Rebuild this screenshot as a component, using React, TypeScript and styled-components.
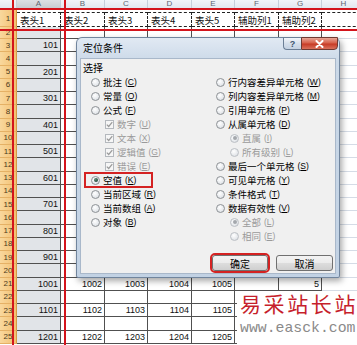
import React from 'react'
import styled, {createGlobalStyle, css} from 'styled-components'

const CJK = '"Noto Sans CJK SC", "Liberation Sans", sans-serif'
const LATIN = '"Liberation Sans", Arial, sans-serif'

const GlobalStyle = createGlobalStyle`
  html, body {
    margin: 0;
    padding: 0;
    background: #fff;
  }
  body {
    width: 357px;
    height: 345px;
    overflow: hidden;
    font-family: ${LATIN};
  }
`

const COLS = ['A', 'B', 'C', 'D', 'E', 'F', 'G', 'H']
const HEADERS = ['表头1', '表头2', '表头3', '表头4', '表头5', '辅助列1', '辅助列2', '']
const ROWS = Array.from({length: 25}, (_, i) => i + 1)

function cellValue(row: number, col: number): string {
  if (row === 1) return HEADERS[col]
  if (row < 3 || row % 2 === 0) return ''
  const base = (row - 1) / 2
  if (col === 0) return String(base * 100 + 1)
  if (row >= 21 && col <= 4) return String(base * 100 + col + 1)
  if (row === 21 && col === 6) return '5'
  return ''
}

type Opt = {
  label: string
  key: string
  kind?: 'radio' | 'check'
  indent?: boolean
  on?: boolean
  off?: boolean
  marked?: boolean
}

const LEFT_OPTS: Opt[] = [
  {label: '批注', key: 'C'},
  {label: '常量', key: 'O'},
  {label: '公式', key: 'F'},
  {label: '数字', key: 'U', kind: 'check', indent: true, on: true, off: true},
  {label: '文本', key: 'X', kind: 'check', indent: true, on: true, off: true},
  {label: '逻辑值', key: 'G', kind: 'check', indent: true, on: true, off: true},
  {label: '错误', key: 'E', kind: 'check', indent: true, on: true, off: true},
  {label: '空值', key: 'K', on: true, marked: true},
  {label: '当前区域', key: 'R'},
  {label: '当前数组', key: 'A'},
  {label: '对象', key: 'B'},
]

const RIGHT_OPTS: Opt[] = [
  {label: '行内容差异单元格', key: 'W'},
  {label: '列内容差异单元格', key: 'M'},
  {label: '引用单元格', key: 'P'},
  {label: '从属单元格', key: 'D'},
  {label: '直属', key: 'I', indent: true, on: true, off: true},
  {label: '所有级别', key: 'L', indent: true, off: true},
  {label: '最后一个单元格', key: 'S'},
  {label: '可见单元格', key: 'Y'},
  {label: '条件格式', key: 'T'},
  {label: '数据有效性', key: 'V'},
  {label: '全部', key: 'L', indent: true, on: true, off: true},
  {label: '相同', key: 'E', indent: true, off: true},
]

function OptionList({items}: {items: Opt[]}) {
  return (
    <OptionColumn>
      {items.map(o => (
        <OptionRow key={o.label} $indent={o.indent ? 14 : 0} $off={o.off} $marked={o.marked}>
          {o.kind === 'check' ? (
            <CheckBox $off={o.off}>
              {o.on && (
                <svg width='7' height='7' viewBox='0 0 7 7'>
                  <polyline points='0.8,3.6 2.7,5.5 6.3,1.2' fill='none' stroke='#9a9a9a' strokeWidth='1.2' />
                </svg>
              )}
            </CheckBox>
          ) : (
            <Radio $on={o.on} $off={o.off} />
          )}
          <span>{o.label}</span>
          <Key>
            (<u>{o.key}</u>)
          </Key>
        </OptionRow>
      ))}
    </OptionColumn>
  )
}

export default function App() {
  return (
    <>
      <GlobalStyle />
      <Screen>
        <Sheet>
          <ColHead />
          {COLS.map(c => (
            <ColHead key={c} $active={c === 'A'}>
              {c}
            </ColHead>
          ))}
          {ROWS.map(r => (
            <React.Fragment key={r}>
              <RowHead>{r}</RowHead>
              {COLS.map((c, i) => (
                <Cell
                  key={c}
                  $sel={i === 0 && r >= 2}
                  $boxed={i <= 6 && r >= 2}
                  $ants={r === 1}
                  $text={r === 1}
                >
                  {cellValue(r, i)}
                </Cell>
              ))}
            </React.Fragment>
          ))}
        </Sheet>

        <RedRule $y={8} />
        <RedRule $y={29} />
        <RedRule $x={12} />
        <RedRule $x={64} />

        <Dialog>
          <TitleBar>
            <Title>定位条件</Title>
            <Controls>
              <HelpButton>?</HelpButton>
              <CloseButton>
                <svg width='9' height='8' viewBox='0 0 9 8'>
                  <path d='M1.5 1 L7.5 7 M7.5 1 L1.5 7' stroke='#fff' strokeWidth='2' strokeLinecap='round' />
                </svg>
              </CloseButton>
            </Controls>
          </TitleBar>
          <Client>
            <GroupLabel>选择</GroupLabel>
            <Options>
              <OptionList items={LEFT_OPTS} />
              <OptionList items={RIGHT_OPTS} />
            </Options>
            <ButtonRow>
              <DlgButton $w={56} $marked>
                确定
              </DlgButton>
              <DlgButton $w={57}>取消</DlgButton>
            </ButtonRow>
          </Client>
        </Dialog>

        <Watermark>
          <WmTitle>易采站长站</WmTitle>
          <WmUrl>www.easck.com</WmUrl>
        </Watermark>
      </Screen>
    </>
  )
}

const Screen = styled.div`
  position: relative;
  width: 357px;
  height: 345px;
  overflow: hidden;
  background: #fff;
`

const Sheet = styled.div`
  display: grid;
  grid-template-columns: 17px 44px 44px 43px 44px 43px 44px 43px 44px;
  grid-template-rows: 10px 17px 12px repeat(23, 13.26px);
  width: 366px;
  background: #fff;
`

const ColHead = styled.div<{$active?: boolean}>`
  box-sizing: border-box;
  overflow: hidden;
  text-align: center;
  font-size: 8px;
  line-height: 7px;
  color: #5d6672;
  background: ${p => (p.$active ? 'linear-gradient(#dde0e4, #c5cad0)' : 'linear-gradient(#f2f5f9, #e0e6ee)')};
  border-right: 1px solid #c6cfda;
  border-bottom: 1px solid #9fb1c5;
`

const RowHead = styled.div`
  box-sizing: border-box;
  display: flex;
  align-items: center;
  justify-content: center;
  font-size: 8px;
  color: #4a3b22;
  background: linear-gradient(90deg, #f9d89d, #f3c071);
  border-right: 1px solid #d69a44;
  border-bottom: 1px solid #e5b165;
`

const Cell = styled.div<{$sel?: boolean; $boxed?: boolean; $ants?: boolean; $text?: boolean}>`
  box-sizing: border-box;
  display: flex;
  align-items: center;
  justify-content: ${p => (p.$text ? 'flex-start' : 'flex-end')};
  padding: 0 2px 0 3px;
  overflow: hidden;
  white-space: nowrap;
  font-family: ${p => (p.$text ? CJK : LATIN)};
  font-size: ${p => (p.$text ? '9.5px' : '9px')};
  color: #111;
  background: ${p => (p.$sel ? '#e1e4e8' : '#fff')};
  border-right: 1px solid ${p => (p.$boxed ? '#505050' : '#d5dce6')};
  border-bottom: 1px solid ${p => (p.$boxed ? '#505050' : '#d5dce6')};

  ${p =>
    p.$ants &&
    css`
      margin-top: 2px;
      border-top: 1px dashed #222;
      border-bottom: 1px dashed #222;
      border-right: 1px dashed #222;
    `}
`

const RedRule = styled.div<{$x?: number; $y?: number}>`
  position: absolute;
  background: #d3141c;
  ${p =>
    p.$x !== undefined
      ? css`
          left: ${p.$x}px;
          top: 0;
          bottom: 0;
          width: 2px;
        `
      : css`
          top: ${p.$y}px;
          left: 0;
          right: 0;
          height: 2px;
        `}
`

const Dialog = styled.div`
  position: absolute;
  left: 76px;
  top: 37px;
  width: 264px;
  height: 241px;
  box-sizing: border-box;
  display: flex;
  flex-direction: column;
  border: 1px solid #71859d;
  border-radius: 6px 6px 2px 2px;
  background: linear-gradient(180deg, #e1e9f3 0%, #cbd9e8 10%, #c2d2e4 100%);
  box-shadow: 2px 3px 6px rgba(0, 0, 0, 0.35);
  font-family: ${CJK};
`

const TitleBar = styled.div`
  display: flex;
  align-items: flex-start;
  height: 20px;
  padding-left: 6px;
`

const Title = styled.div`
  font-size: 10px;
  line-height: 20px;
  color: #000;
`

const Controls = styled.div`
  display: flex;
  margin: -1px 1px 0 auto;
`

const HelpButton = styled.div`
  box-sizing: border-box;
  width: 18px;
  height: 13px;
  display: flex;
  align-items: center;
  justify-content: center;
  font-family: ${LATIN};
  font-size: 9px;
  font-weight: 700;
  color: #40566f;
  background: linear-gradient(#f3f6fa, #d5dfeb 50%, #c4d2e2);
  border: 1px solid #6c7f96;
  border-right: none;
  border-radius: 0 0 0 4px;
`

const CloseButton = styled.div`
  box-sizing: border-box;
  width: 37px;
  height: 13px;
  display: flex;
  align-items: center;
  justify-content: center;
  background: linear-gradient(#e8a596, #d6604a 45%, #c73b26 55%, #d9715c);
  border: 1px solid #6f3a32;
  border-radius: 0 0 4px 0;
`

const Client = styled.div`
  flex: 1;
  display: flex;
  flex-direction: column;
  margin: 0 3px 3px;
  padding: 2px 2px 0;
  box-sizing: border-box;
  background: #f0f0f0;
  border: 1px solid #a9b8ca;
`

const GroupLabel = styled.div`
  font-size: 10px;
  line-height: 14px;
  color: #000;
`

const Options = styled.div`
  display: grid;
  grid-template-columns: 125px 1fr;
  margin-left: 8px;
`

const OptionColumn = styled.div`
  display: flex;
  flex-direction: column;
`

const OptionRow = styled.div<{$indent: number; $off?: boolean; $marked?: boolean}>`
  position: relative;
  display: flex;
  align-items: center;
  height: 14px;
  padding-left: ${p => p.$indent}px;
  font-size: 9.5px;
  white-space: nowrap;
  color: ${p => (p.$off ? '#9a9a9a' : '#000')};

  & > span:nth-child(2) {
    margin-left: 3px;
  }

  ${p =>
    p.$marked &&
    css`
      &::after {
        content: '';
        position: absolute;
        left: -7px;
        top: -1px;
        width: 69px;
        height: 16px;
        box-sizing: border-box;
        border: 2px solid #d42222;
      }
    `}
`

const Radio = styled.span<{$on?: boolean; $off?: boolean}>`
  flex: none;
  box-sizing: border-box;
  width: 9px;
  height: 9px;
  border-radius: 50%;
  display: flex;
  align-items: center;
  justify-content: center;
  border: 1px solid ${p => (p.$off ? '#bcc0c5' : '#8e9296')};
  background: radial-gradient(circle at 40% 35%, #fff 0%, #e4e7eb 65%, #cdd2d8 100%);

  &::after {
    content: '';
    display: ${p => (p.$on ? 'block' : 'none')};
    width: 4px;
    height: 4px;
    border-radius: 50%;
    background: ${p => (p.$off ? '#a4a8ad' : 'radial-gradient(circle at 35% 35%, #5f8f7a, #123026)')};
  }
`

const CheckBox = styled.span<{$off?: boolean}>`
  flex: none;
  box-sizing: border-box;
  width: 9px;
  height: 9px;
  display: flex;
  align-items: center;
  justify-content: center;
  border: 1px solid ${p => (p.$off ? '#b4b8bd' : '#8e9296')};
  background: #f6f6f6;
`

const Key = styled.span`
  margin-left: 3px;
  font-family: ${LATIN};
  font-size: 8.5px;
`

const ButtonRow = styled.div`
  display: flex;
  justify-content: flex-end;
  gap: 8px;
  margin-top: auto;
  padding-bottom: 2px;
`

const DlgButton = styled.div<{$w: number; $marked?: boolean}>`
  box-sizing: border-box;
  width: ${p => p.$w}px;
  height: 16px;
  display: flex;
  align-items: center;
  justify-content: center;
  font-size: 10px;
  color: #000;
  border: 1px solid #707070;
  border-radius: 3px;
  background: linear-gradient(#f3f3f3 0%, #ebebeb 50%, #dddddd 51%, #cfcfcf 100%);
  outline: ${p => (p.$marked ? '2px solid #d42222' : 'none')};
`

const Watermark = styled.div`
  position: absolute;
  left: 237px;
  top: 291px;
  right: 0;
  bottom: 0;
  display: flex;
  flex-direction: column;
  padding-left: 3px;
  background: #fff;
`

const WmTitle = styled.div`
  font-family: ${CJK};
  font-size: 21px;
  line-height: 24px;
  letter-spacing: 2.6px;
  color: #c61f2c;
  white-space: nowrap;
`

const WmUrl = styled.div`
  margin-top: 5px;
  font-family: "Liberation Mono", monospace;
  font-size: 14.8px;
  line-height: 16px;
  color: #8a8a8a;
  white-space: nowrap;
`
